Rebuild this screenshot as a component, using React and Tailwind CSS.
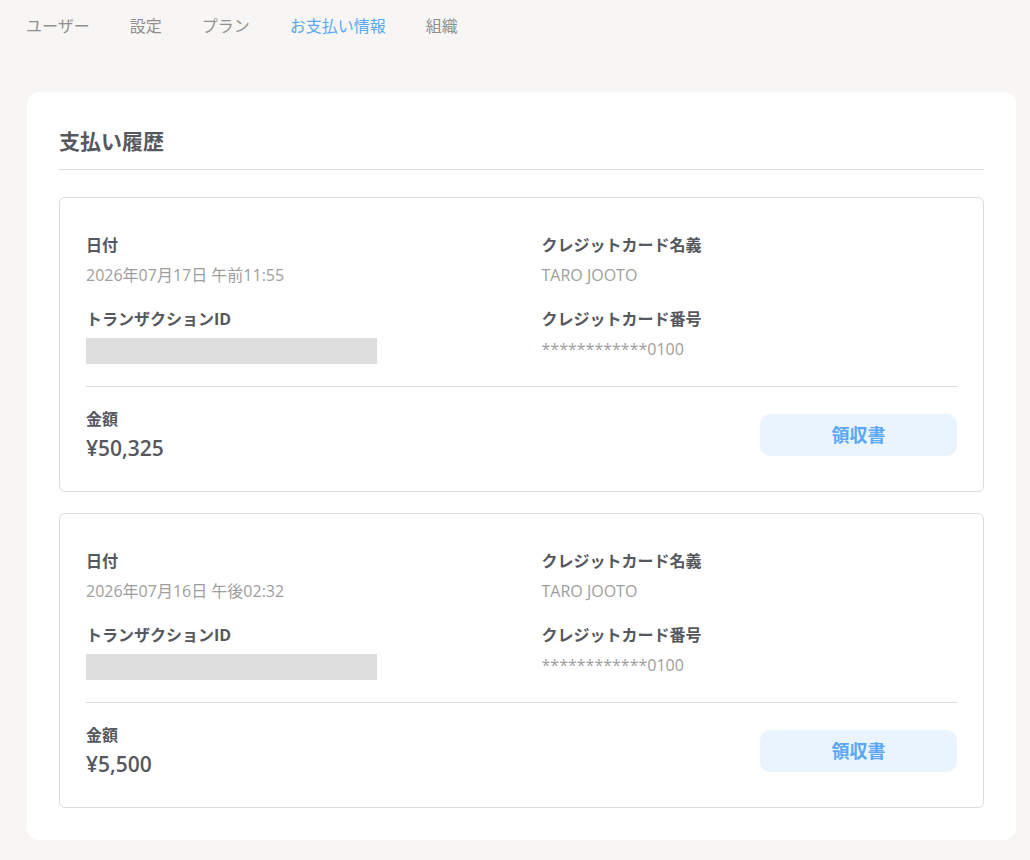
import React from 'react';

const font = { fontFamily: "'Open Sans', 'Noto Sans CJK JP', sans-serif" };

const tabs = ['ユーザー', '設定', 'プラン', 'お支払い情報', '組織'];

const payments = [
  { id: 1, date: '2026年07月17日 午前11:55', name: 'TARO JOOTO', card: '************0100', amount: '¥50,325' },
  { id: 2, date: '2026年07月16日 午後02:32', name: 'TARO JOOTO', card: '************0100', amount: '¥5,500' },
];

function Field({ label, children }) {
  return (
    <div>
      <div className="text-base leading-[22px] font-bold text-[#55585e]">{label}</div>
      <div className="mt-2">{children}</div>
    </div>
  );
}

function PaymentCard({ p }) {
  return (
    <div className="border border-[#dcdcdc] rounded-md px-[26px] pt-9 pb-[29px]">
      <div className="grid grid-cols-2 gap-x-10 gap-y-[22px]">
        <Field label="日付">
          <div className="text-base leading-[22px] text-[#9e9e9e]">{p.date}</div>
        </Field>
        <Field label="クレジットカード名義">
          <div className="text-base leading-[22px] text-[#9e9e9e]">{p.name}</div>
        </Field>
        <Field label="トランザクションID">
          <div className="h-[26px] w-[291px] bg-[#dedede]" />
        </Field>
        <Field label="クレジットカード番号">
          <div className="text-base leading-[22px] text-[#9e9e9e]">{p.card}</div>
        </Field>
      </div>
      <div className="mt-[22px] border-t border-[#dcdcdc] pt-[21px] flex items-center justify-between">
        <div>
          <div className="text-base leading-[22px] font-bold text-[#55585e]">金額</div>
          <div className="mt-1 text-[21px] leading-[28px] font-semibold text-[#55585e]">{p.amount}</div>
        </div>
        <button className="w-[197px] h-[42px] rounded-[10px] bg-[#eaf4ff] text-[#5aa7f5] text-[18px] font-bold">
          領収書
        </button>
      </div>
    </div>
  );
}

export default function App() {
  return (
    <div className="min-h-[860px] bg-[#f7f6f4]" style={font}>
      <nav className="flex gap-10 pl-[26px] pt-[14px] h-[92px]">
        {tabs.map(t => (
          <div key={t} className={`text-[16px] leading-[24px] ${t === 'お支払い情報' ? 'text-[#5aa7f5]' : 'text-[#8f8f8f]'}`}>
            {t}
          </div>
        ))}
      </nav>
      <div className="ml-[27px] mr-[14px] bg-white rounded-xl px-8 pt-8 pb-8">
        <h2 className="text-[21px] leading-[35px] font-bold text-[#55585e] pb-[10px] border-b border-[#dcdcdc]">
          支払い履歴
        </h2>
        <div className="mt-[27px] flex flex-col gap-[21px]">
          {payments.map(p => (
            <PaymentCard key={p.id} p={p} />
          ))}
        </div>
      </div>
    </div>
  );
}
